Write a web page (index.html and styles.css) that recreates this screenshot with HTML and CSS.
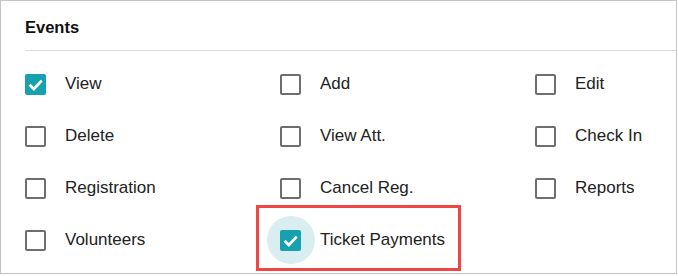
FILE: index.html
```html
<!DOCTYPE html>
<html>
<head>
<meta charset="utf-8">
<link rel="stylesheet" href="styles.css">
</head>
<body>
<div class="panel">
  <div class="panel-head">Events</div>
  <div class="perm-grid">
    <label class="perm"><span class="box checked"><svg viewBox="0 0 20 20"><path d="M4.3 10.3 L8.4 14.3 L16 6.3"/></svg></span><span class="text">View</span></label>
    <label class="perm"><span class="box"></span><span class="text">Add</span></label>
    <label class="perm"><span class="box"></span><span class="text">Edit</span></label>
    <label class="perm"><span class="box"></span><span class="text">Delete</span></label>
    <label class="perm"><span class="box"></span><span class="text">View Att.</span></label>
    <label class="perm"><span class="box"></span><span class="text">Check In</span></label>
    <label class="perm"><span class="box"></span><span class="text">Registration</span></label>
    <label class="perm"><span class="box"></span><span class="text">Cancel Reg.</span></label>
    <label class="perm"><span class="box"></span><span class="text">Reports</span></label>
    <label class="perm"><span class="box"></span><span class="text">Volunteers</span></label>
    <label class="perm highlighted"><span class="box checked focus"><svg viewBox="0 0 20 20"><path d="M4.3 10.3 L8.4 14.3 L16 6.3"/></svg></span><span class="text">Ticket Payments</span></label>
  </div>
</div>
</body>
</html>
```
FILE: styles.css
```css
html, body {
  margin: 0;
  padding: 0;
  background: #ffffff;
}
body {
  font-family: "Liberation Sans", Arial, sans-serif;
  color: #222222;
}
.panel {
  box-sizing: border-box;
  width: 677px;
  height: 274px;
  border: 1px solid #c4c4c4;
  overflow: hidden;
}
.panel-head {
  font-size: 16.5px;
  font-weight: bold;
  line-height: 18px;
  color: #111111;
  padding: 17px 0 0 24px;
}
.panel-head::after {
  content: "";
  display: block;
  height: 1px;
  background: #dcdcdc;
  margin-top: 14px;
}
.perm-grid {
  display: grid;
  grid-template-columns: 255px 255px 140px;
  grid-auto-rows: 52px;
  padding: 7px 0 0 24px;
}
.perm {
  display: flex;
  align-items: center;
  gap: 19px;
  font-size: 17px;
  color: #222222;
  position: relative;
}
.box {
  box-sizing: border-box;
  width: 21px;
  height: 21px;
  border: 2px solid #6e6e6e;
  border-radius: 2px;
  flex: none;
  position: relative;
  z-index: 0;
}
.box.checked {
  border: none;
  background: #17a0ad;
}
.box svg {
  width: 21px;
  height: 21px;
  display: block;
  position: relative;
  z-index: 2;
}
.box svg path {
  fill: none;
  stroke: #ffffff;
  stroke-width: 2.6;
}
.box.focus::before {
  content: "";
  position: absolute;
  left: -13.5px;
  top: -13.5px;
  width: 48px;
  height: 48px;
  border-radius: 50%;
  background: #d8eef1;
  z-index: 0;
}
.box.focus::after {
  content: "";
  position: absolute;
  inset: 0;
  border-radius: 2px;
  background: #17a0ad;
  z-index: 1;
}
.highlighted::before {
  content: "";
  position: absolute;
  left: -24px;
  top: -9px;
  width: 205px;
  height: 66px;
  box-sizing: border-box;
  border: 3px solid #f04545;
}
```
